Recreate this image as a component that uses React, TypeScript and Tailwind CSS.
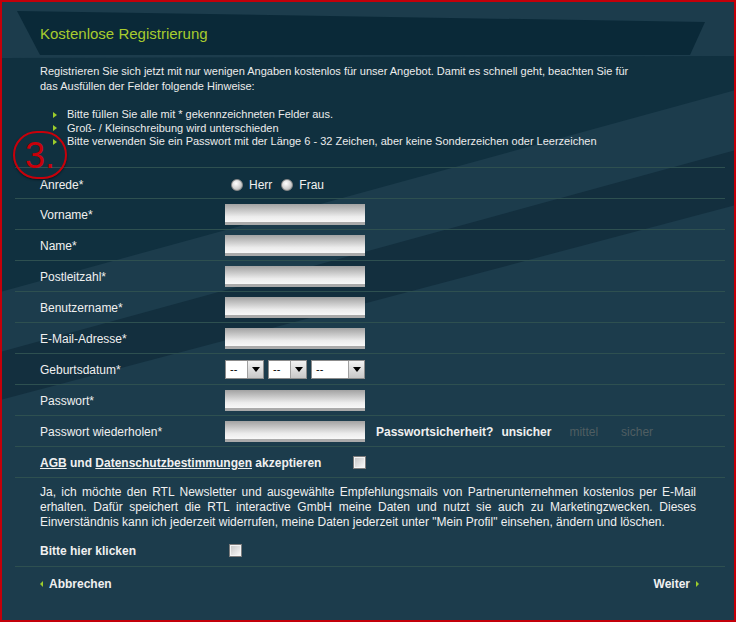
import React from 'react';

const TextInput = () => (
  <div className="w-[140px] h-[21px] bg-gradient-to-b from-[#a2a2a2] via-[#ececec] via-70% to-[#f8f8f8] border-b-[3px] border-[#aaaaaa]" />
);

const Select = ({ className }: { className: string }) => (
  <div className={`${className} h-[19px] flex bg-white border border-[#8c8c8c]`}>
    <span className="flex-1 pl-[4px] text-[11px] leading-[17px] text-black">--</span>
    <span className="w-[16px] h-full flex items-center justify-center border-l border-[#a0a0a0] bg-gradient-to-b from-[#f2f2f2] to-[#c8c8c8]">
      <span className="w-0 h-0 border-x-[4px] border-x-transparent border-t-[5px] border-t-black" />
    </span>
  </div>
);

const Radio = () => (
  <span className="inline-block w-[12px] h-[12px] rounded-full border border-[#8a8a8a] bg-[radial-gradient(circle_at_40%_35%,#ffffff,#d2d2d2_55%,#9c9c9c)]" />
);

const Checkbox = () => (
  <span className="inline-block w-[13px] h-[13px] border border-[#7c7c7c] bg-[#f4f4f4] p-[1px]">
    <span className="block w-full h-full bg-gradient-to-br from-[#c9c9c9] to-[#f6f6f6]" />
  </span>
);

const Bullet = () => (
  <span className="w-0 h-0 border-y-[3px] border-y-transparent border-l-[4px] border-l-[#9ccc2c] mr-[10px]" />
);

const textFields = ['Vorname*', 'Name*', 'Postleitzahl*', 'Benutzername*', 'E-Mail-Adresse*'];

export default function App() {
  return (
    <div className="w-[736px] h-[622px] relative overflow-hidden border-2 border-[#c4000a] bg-[#1c3c4c] font-['Liberation_Sans',Arial,sans-serif] text-[#f0f0f0]">
      {/* background stripes */}
      <svg className="absolute top-0 left-0 w-[732px] h-[618px]" viewBox="2 2 732 618">
        <polygon points="0,58 736,56 736,90 0,292" fill="#10303f" />
        <polygon points="0,352 736,150 736,205 0,400" fill="#132f3e" />
        <polygon points="17,11 705,22 690,55 40,55" fill="#0a2938" />
      </svg>

      <div className="relative">
        {/* intro */}
        <div className="h-[165px] pl-[38px] pt-[23px]">
          <h1 className="text-[15px] leading-[18px] text-[#a8cc2e]">Kostenlose Registrierung</h1>
          <p className="mt-[21px] text-[11px] leading-[15px] text-[#ececec] w-[600px]">
            Registrieren Sie sich jetzt mit nur wenigen Angaben kostenlos für unser Angebot. Damit es schnell geht, beachten Sie für das Ausfüllen der Felder folgende Hinweise:
          </p>
          <ul className="mt-[14px] pl-[13px] text-[11px] leading-[13.5px] text-[#ececec]">
            <li className="flex items-center"><Bullet />Bitte füllen Sie alle mit * gekennzeichneten Felder aus.</li>
            <li className="flex items-center"><Bullet />Groß- / Kleinschreibung wird unterschieden</li>
            <li className="flex items-center"><Bullet />Bitte verwenden Sie ein Passwort mit der Länge 6 - 32 Zeichen, aber keine Sonderzeichen oder Leerzeichen</li>
          </ul>
        </div>

        {/* form rows */}
        <div className="ml-[13px] mr-[9px] text-[12px]">
          <div className="h-[31px] border-t border-[#2e5050] pl-[25px] pt-[3px] flex items-center">
            <span className="w-[185px]">Anrede*</span>
            <span className="ml-[6px] flex items-center"><Radio /></span>
            <span className="ml-[6px]">Herr</span>
            <span className="ml-[9px] flex items-center"><Radio /></span>
            <span className="ml-[6px]">Frau</span>
          </div>
          {textFields.map((f) => (
            <div key={f} className="h-[31px] border-t border-[#2e5050] pl-[25px] flex items-center">
              <span className="w-[185px] pt-[2px]">{f}</span>
              <TextInput />
            </div>
          ))}
          <div className="h-[31px] border-t border-[#2e5050] pl-[25px] flex items-center">
            <span className="w-[185px] pt-[2px]">Geburtsdatum*</span>
            <Select className="w-[39px]" />
            <Select className="w-[39px] ml-[4px]" />
            <Select className="w-[54px] ml-[4px]" />
          </div>
          <div className="h-[31px] border-t border-[#2e5050] pl-[25px] flex items-center">
            <span className="w-[185px] pt-[2px]">Passwort*</span>
            <TextInput />
          </div>
          <div className="h-[31px] border-t border-[#2e5050] pl-[25px] flex items-center">
            <span className="w-[185px] pt-[2px]">Passwort wiederholen*</span>
            <TextInput />
            <span className="ml-[11px] pt-[2px] font-bold">Passwortsicherheit?</span>
            <span className="ml-[8px] pt-[2px] font-bold">unsicher</span>
            <span className="ml-[18px] pt-[2px] text-[#4f5e62]">mittel</span>
            <span className="ml-[23px] pt-[2px] text-[#4f5e62]">sicher</span>
          </div>
          <div className="h-[31px] border-t border-[#2e5050] pl-[25px] flex items-center font-bold">
            <span className="w-[313px] pt-[2px]">
              <span className="underline">AGB</span> und <span className="underline">Datenschutzbestimmungen</span> akzeptieren
            </span>
            <Checkbox />
          </div>

          <div className="border-t border-[#2e5050] pl-[25px] pr-[29px] pt-[7px] pb-[8px]">
            <p className="leading-[15px] text-justify">
              Ja, ich möchte den RTL Newsletter und ausgewählte Empfehlungsmails von Partnerunternehmen kostenlos per E-Mail erhalten. Dafür speichert die RTL interactive GmbH meine Daten und nutzt sie auch zu Marketingzwecken. Dieses Einverständnis kann ich jederzeit widerrufen, meine Daten jederzeit unter "Mein Profil" einsehen, ändern und löschen.
            </p>
            <div className="mt-[13px] h-[15px] flex items-center font-bold">
              <span className="w-[189px]">Bitte hier klicken</span>
              <Checkbox />
            </div>
          </div>

          <div className="h-[34px] border-t border-[#2e5050] pl-[25px] pr-[26px] flex items-center justify-between font-bold">
            <span className="flex items-center">
              <span className="w-0 h-0 border-y-[3px] border-y-transparent border-r-[3px] border-r-[#9ccc2c] mr-[6px]" />
              Abbrechen
            </span>
            <span className="flex items-center">
              Weiter
              <span className="w-0 h-0 border-y-[3px] border-y-transparent border-l-[3px] border-l-[#9ccc2c] ml-[6px]" />
            </span>
          </div>
        </div>
      </div>

      {/* step marker */}
      <div className="absolute left-[11px] top-[129px] w-[54px] h-[48px] rounded-full border-2 border-[#c8000a] shadow-[0_1px_2px_rgba(0,0,0,0.5)] flex items-center justify-center">
        <span className="text-[36px] leading-none text-[#c8000a] mt-[2px]">3.</span>
      </div>
    </div>
  );
}
